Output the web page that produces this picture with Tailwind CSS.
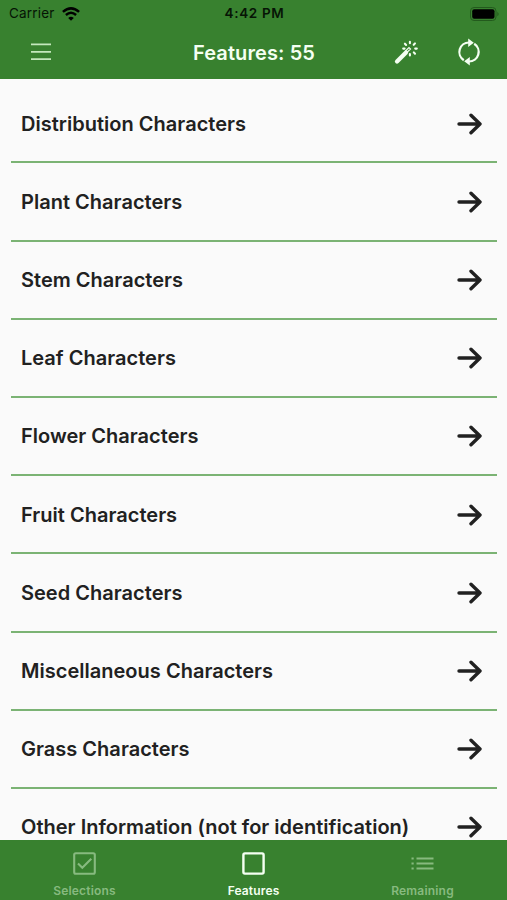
<!DOCTYPE html>
<html lang="en">
<head>
<meta charset="utf-8">
<title>Features</title>
<script src="https://cdn.jsdelivr.net/npm/@tailwindcss/browser@4"></script>
</head>
<body class="bg-[#fafafa]">
<svg class="hidden">
  <symbol id="arrow" viewBox="0 0 26 24"><path d="M3 12H24M15 3.3 24 12 15 20.7" fill="none" stroke="currentColor" stroke-width="3.4" stroke-linecap="round" stroke-linejoin="round"/></symbol>
</svg>
<div class="flex h-[900px] w-[507px] flex-col overflow-hidden font-['Inter',sans-serif] text-[#212121]">
  <header class="h-[79px] shrink-0 bg-[#38812f]">
    <div class="grid h-[27px] grid-cols-[1fr_auto_1fr] items-center pr-[7px] pl-[9px] text-[13px] leading-[27px] text-[#061405]">
      <div class="flex items-center gap-[7px]">
        <span class="text-[13.5px] tracking-[0.2px]">Carrier</span>
        <svg class="h-[14px] w-[18px]" viewBox="0 0 18 14" fill="none" stroke="#000" stroke-width="2.5"><path d="M.9 4.9Q9-2.2 17.1 4.9M3.9 8Q9 3.6 14.1 8"/><path d="M9 13.7 6.2 10.9Q9 8.6 11.8 10.9Z" fill="#000" stroke="none"/></svg>
      </div>
      <span class="text-center text-[13.5px] font-semibold tracking-[0.65px]">4:42 PM</span>
      <svg class="h-[14px] w-[30px] justify-self-end" viewBox="0 0 30 14"><rect x=".5" y=".5" width="25.5" height="13" rx="3.5" fill="none" stroke="#235a1d"/><rect x="2.2" y="2.2" width="22.3" height="9.6" rx="2" fill="#000"/><path d="M27.4 4.7Q29.8 7 27.4 9.3Z" fill="#235a1d"/></svg>
    </div>
    <div class="grid h-[50px] grid-cols-[1fr_auto_1fr] items-center pr-[26px] pl-[31px] text-[#f4fff2]">
      <svg class="h-[18px] w-5" viewBox="0 0 20 18" fill="none" stroke="#c4e8bd" stroke-width="1.8"><path d="M0 1.3H20M0 8.9H20M0 16.2H20"/></svg>
      <h1 class="-ml-[4px] pt-px text-[20px] font-semibold tracking-[0.1px]">Features: 55</h1>
      <div class="flex items-center justify-end gap-[38px]">
        <svg class="h-[26px] w-[26px]" viewBox="0 0 26 26" fill="none" stroke="currentColor" stroke-linecap="round"><path d="M4 22.5 13 13.5" stroke-width="4.2"/><path d="M12.5 12 16 8.5 17.5 10 14 13.5Z" stroke-width="1.2"/><path d="M16.9 2.7V4.3M11.9 4.7 13.1 6M22 4.4 20.7 5.8M10.2 9.6H11.6M22.2 9.6H23.8M20.8 13.4 22 14.7M16.9 15V16.5" stroke-width="2.1"/></svg>
        <svg class="h-[28px] w-[24px]" viewBox="0 0 24 28" fill="none" stroke="currentColor" stroke-width="2.2"><path d="M6.8 22.2A9.6 9.6 0 0 1 12 4.5M17.2 5.8A9.6 9.6 0 0 1 12 23.5"/><path d="M11.2.6 16.8 4.8 11.2 9ZM12.8 19 7.2 23.2 12.8 27.4Z" fill="currentColor" stroke="none"/></svg>
      </div>
    </div>
  </header>
  <main class="min-h-0 flex-1 overflow-hidden px-[10.5px] pt-[6.3px]">
    <ul id="list"></ul>
  </main>
  <nav class="grid h-[60px] shrink-0 grid-cols-3 bg-[#38812f] text-[12px] leading-4 font-semibold tracking-[0.2px] text-[#87ba7f]">
    <div class="flex flex-col items-center pt-[12px]">
      <svg class="h-[23px] w-[23px]" viewBox="0 0 23 23" fill="none" stroke="currentColor" stroke-width="2.1"><rect x="1.2" y="1.2" width="20.6" height="20.6" rx="1.5"/><path d="M5 11.5 9.3 15.8 18.3 6.7"/></svg>
      <span class="mt-[8px]">Selections</span>
    </div>
    <div class="flex flex-col items-center pt-[12px] text-[#f4fff2]">
      <svg class="h-[23px] w-[23px]" viewBox="0 0 23 23" fill="none" stroke="currentColor" stroke-width="2.4"><rect x="1.4" y="1.4" width="20.2" height="20.2" rx="1.5"/></svg>
      <span class="mt-[8px] tracking-[0.15px]">Features</span>
    </div>
    <div class="flex flex-col items-center pt-[12px]">
      <svg class="h-[23px] w-[23px]" viewBox="0 0 23 23" fill="none" stroke="currentColor" stroke-width="2.2"><path d="M.5 6.5H2.7M5.5 6.5H22.5M.5 11.5H2.7M5.5 11.5H22.5M.5 16.5H2.7M5.5 16.5H22.5"/></svg>
      <span class="mt-[8px]">Remaining</span>
    </div>
  </nav>
</div>
<script>
  const rows = ["Distribution Characters", "Plant Characters", "Stem Characters", "Leaf Characters", "Flower Characters", "Fruit Characters", "Seed Characters", "Miscellaneous Characters", "Grass Characters", "Other Information (not for identification)"];
  document.getElementById("list").innerHTML = rows.map(t => `<li class="flex h-[78.2px] items-center justify-between border-b-2 border-[#7bb374] pt-[0.6px] pr-[15px] pl-[10.5px]"><span class="text-[20px] font-semibold tracking-[0.02px] whitespace-nowrap">${t}</span><svg class="h-6 w-[26px]"><use href="#arrow"/></svg></li>`).join("");
</script>
</body>
</html>
